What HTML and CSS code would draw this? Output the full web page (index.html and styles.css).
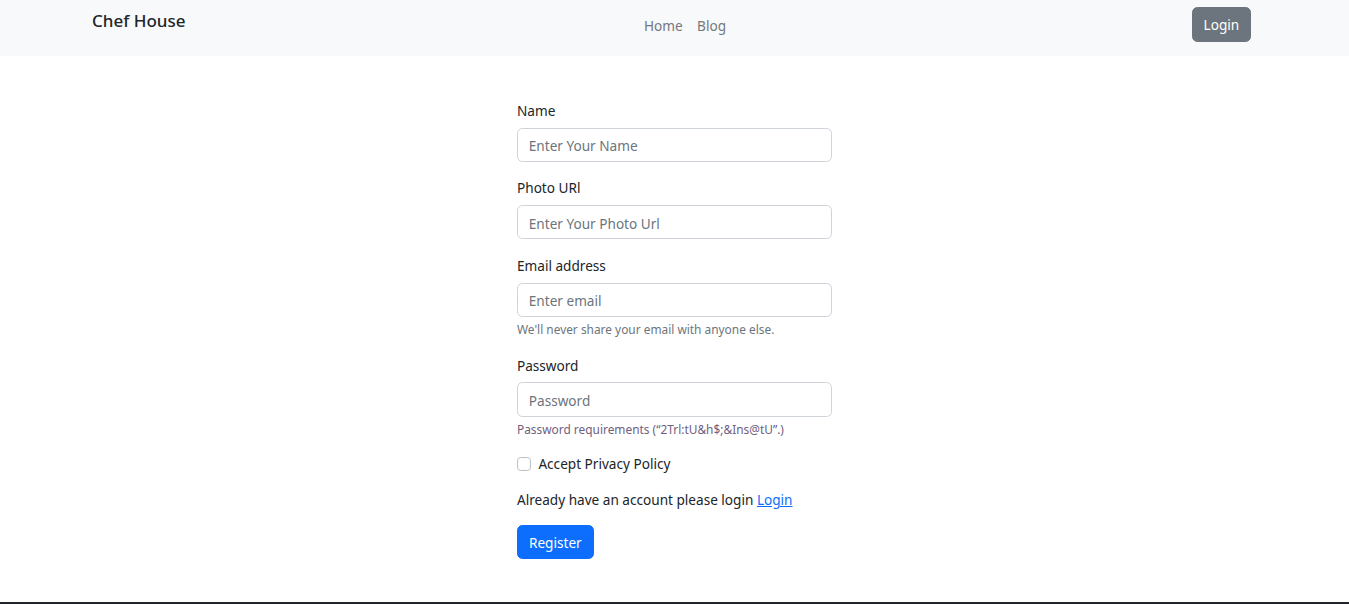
FILE: index.html
```html
<!DOCTYPE html>
<html lang="en">
<head>
<meta charset="utf-8">
<title>Chef House - Register</title>
<link rel="stylesheet" href="styles.css">
</head>
<body>
<header class="navbar">
  <div class="nav-container">
    <a class="brand" href="#">Chef House</a>
    <nav class="nav-links">
      <a href="#">Home</a>
      <a href="#">Blog</a>
    </nav>
    <button class="btn btn-secondary">Login</button>
  </div>
</header>
<main class="main">
  <form class="form">
    <div class="field">
      <label class="label">Name</label>
      <input class="input" type="text" placeholder="Enter Your Name">
    </div>
    <div class="field">
      <label class="label">Photo URl</label>
      <input class="input" type="text" placeholder="Enter Your Photo Url">
    </div>
    <div class="field">
      <label class="label">Email address</label>
      <input class="input" type="email" placeholder="Enter email">
      <div class="form-text">We'll never share your email with anyone else.</div>
    </div>
    <div class="field">
      <label class="label">Password</label>
      <input class="input" type="password" placeholder="Password">
      <div class="form-text pw">Password requirements (“2Trl:tU&amp;h$;&amp;Ins@tU”.)</div>
    </div>
    <div class="field check">
      <span class="box"></span>
      <label class="check-label">Accept Privacy Policy</label>
    </div>
    <p class="already">Already have an account please login <a href="#">Login</a></p>
    <button type="button" class="btn btn-primary">Register</button>
  </form>
</main>
<footer class="footer"></footer>
</body>
</html>
```
FILE: styles.css
```css
* { box-sizing: border-box; }
html, body { margin: 0; padding: 0; }
body {
  font-family: "Segoe UI", "Noto Sans", "Open Sans", sans-serif;
  font-size: 13.6px;
  line-height: 21.6px;
  color: #212529;
  background: #fff;
}
.navbar {
  background: #f8f9fa;
  height: 56px;
}
.nav-container {
  display: flex;
  align-items: flex-start;
  height: 56px;
  padding: 0 98px 0 92px;
}
.brand {
  width: 552px;
  font-size: 17px;
  font-weight: 500;
  color: #212529;
  text-decoration: none;
  line-height: 27px;
  padding-top: 7px;
}
.nav-links {
  display: flex;
  gap: 14.4px;
  padding-top: 15px;
  flex: 1;
}
.nav-links a {
  color: #73787e;
  text-decoration: none;
  line-height: 21.6px;
}
.btn {
  font-family: inherit;
  font-size: 13.6px;
  line-height: 21.6px;
  border: 1px solid transparent;
  border-radius: 5.4px;
  padding: 5.4px 10.8px;
  color: #fff;
  cursor: pointer;
}
.btn-secondary {
  background: #6c757d;
  border-color: #6c757d;
  margin-top: 7px;
  height: 35px;
}
.btn-primary {
  background: #0d6efd;
  border-color: #0d6efd;
  height: 34px;
  padding: 5px 11px 4px;
}
.main {
  display: flex;
  justify-content: center;
  padding: 43px 0 43px;
}
.form { width: 315px; }
.field { margin-bottom: 14.4px; }
.label {
  display: block;
  padding-top: 1px;
  margin-bottom: 6.2px;
  line-height: 21.6px;
}
.input {
  display: block;
  width: 100%;
  height: 34.2px;
  padding: 6.4px 10.8px 4.4px;
  font-family: inherit;
  font-size: 13.6px;
  color: #212529;
  border: 1px solid #ced4da;
  border-radius: 5.4px;
  background: #fff;
}
.input::placeholder { color: #6c757d; }
.form-text {
  margin-top: 3.6px;
  font-size: 11.9px;
  line-height: 18.9px;
  color: #6c757d;
}
.form-text.pw { color: #6f6080; }
.check {
  display: flex;
  align-items: center;
  gap: 7px;
  height: 21.6px;
}
.box {
  width: 14.4px;
  height: 14.4px;
  border: 1px solid #b9bfc5;
  border-radius: 3.6px;
  background: #fff;
}
.already {
  margin: 0 0 14.4px;
  line-height: 21.6px;
}
.already a { color: #0d6efd; }
.footer {
  height: 2px;
  background: #212529;
}
```
